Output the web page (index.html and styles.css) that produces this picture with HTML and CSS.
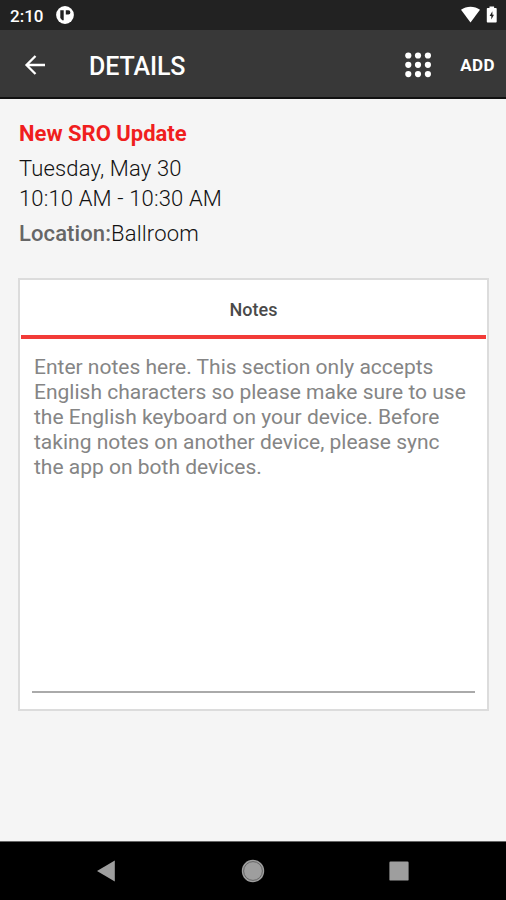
FILE: index.html
```html
<!DOCTYPE html>
<html lang="en">
<head>
<meta charset="utf-8">
<title>Details</title>
<link rel="stylesheet" href="styles.css">
</head>
<body>
<div class="screen">
  <div class="status">
    <span class="clock">2:10</span>
    <svg class="app-badge" width="20" height="20" viewBox="0 0 20 20"><circle cx="10" cy="10" r="8.900" fill="#fff"/><path d="M5.300 5.300h3.400v10H7.200L5.300 13zM10.800 5.300h2.500a2.100 2.100 0 0 1 0 4.200H10.800z" fill="#222"/></svg>
    <svg class="signal" width="48" height="20" viewBox="0 0 48 20"><path d="M4 4.800C9.500.7 17.500.7 23 4.800L13.500 17.500z" fill="#fff"/><path d="M30.800 3h1.700V1.400h4.600V3h1.600c.6 0 1 .4 1 1v12.500c0 .6-.4 1-1 1h-7.900c-.6 0-1-.4-1-1V4c0-.6.400-1 1-1z" fill="#fff"/><path d="M35.400 6.200l-2.800 4.700h1.700v3.500l2.700-4.600h-1.600z" fill="#222"/></svg>
  </div>
  <header class="bar">
    <svg class="back" width="24" height="24" viewBox="0 0 24 24" fill="none" stroke="#fff" stroke-width="2.300"><path d="M22 12H4M12.500 3L3.500 12l9 9"/></svg>
    <h1 class="heading">DETAILS</h1>
    <svg class="grid" width="28" height="28" viewBox="0 0 28 28" fill="#fff"><circle cx="4.300" cy="4.500" r="3.100"/><circle cx="14" cy="4.500" r="3.100"/><circle cx="23.900" cy="4.500" r="3.100"/><circle cx="4.300" cy="13.800" r="3.100"/><circle cx="14" cy="13.800" r="3.100"/><circle cx="23.900" cy="13.800" r="3.100"/><circle cx="4.300" cy="23.100" r="3.100"/><circle cx="14" cy="23.100" r="3.100"/><circle cx="23.900" cy="23.100" r="3.100"/></svg>
    <span class="add">ADD</span>
  </header>
  <main class="content">
    <h2 class="title">New SRO Update</h2>
    <p class="date">Tuesday, May 30</p>
    <p class="time">10:10 AM - 10:30 AM</p>
    <p class="location"><b>Location:</b>Ballroom</p>
    <section class="card">
      <h3 class="tab">Notes</h3>
      <div class="note">Enter notes here. This section only accepts<br>English characters so please make sure to use<br>the English keyboard on your device. Before<br>taking notes on another device, please sync<br>the app on both devices.</div>
    </section>
  </main>
  <nav class="nav">
    <svg width="24" height="24" viewBox="0 0 24 24"><path d="M3 12L20.800 1.500v21z" fill="#9e9e9e"/></svg>
    <svg width="24" height="24" viewBox="0 0 24 24"><circle cx="12" cy="12" r="11.200" fill="#9e9e9e"/><circle cx="12" cy="12" r="9.400" fill="none" stroke="#555" stroke-width=".8"/></svg>
    <svg width="24" height="24" viewBox="0 0 24 24"><rect x="2.400" y="2.600" width="19.200" height="19" rx="1.200" fill="#9e9e9e"/></svg>
  </nav>
</div>
</body>
</html>
```

FILE: styles.css
```css
* { box-sizing: border-box; }
body, h1, h2, h3, p { margin: 0; font-weight: 400; }
body { font-family: Roboto, "Liberation Sans", sans-serif; color: #111; }
svg { display: block; flex: none; }
.screen { width: 506px; height: 900px; display: flex; flex-direction: column; background: #f5f5f5; overflow: hidden; }
.status { height: 30px; flex: none; display: flex; align-items: center; background: #222; padding: 0 0 0 10px; }
.clock { color: #fff; font-size: 17px; font-weight: 500; width: 45px; line-height: 20px; padding-top: 2px; }
.signal { margin-left: auto; margin-right: 1px; }
.bar { height: 69px; flex: none; display: flex; align-items: center; background: #383838; border-bottom: 2px solid #111; padding: 2px 11px 0 23px; }
.heading { margin-left: 42px; color: #fff; font-size: 25px; font-weight: 500; line-height: 30px; padding-top: 4px; letter-spacing: -.1px; }
.grid { margin-left: auto; margin-right: 28px; }
.add { color: #fff; font-size: 17px; font-weight: 700; line-height: 20px; padding-top: 1px; letter-spacing: .4px; }
.content { flex: 1; padding: 21px 17px 0 18px; }
.title, .date, .time, .location { padding-left: 1px; font-size: 22px; line-height: 28px; white-space: nowrap; }
.title { color: #f01e1e; font-weight: 700; }
.date, .time, .location { font-weight: 300; letter-spacing: .15px; }
.date { margin-top: 7px; }
.time { margin-top: 2px; }
.location { margin-top: 7px; }
.location b { color: #666; font-weight: 500; letter-spacing: .1px; }
.card { height: 433px; margin-top: 30px; background: #fff; border: 2px solid #dcdcdc; display: flex; flex-direction: column; }
.tab { height: 59px; flex: none; border-bottom: 4px solid #f23b38; text-align: center; color: #4a4a4a; font-size: 18px; font-weight: 500; line-height: 60px; margin: 0 1px; }
.note { flex: 1; margin: 0 12px 16px; padding: 16px 0 0 2px; border-bottom: 2px solid #aaa; color: #858585; font-size: 21px; line-height: 24.9px; white-space: nowrap; }
.nav { height: 59px; flex: none; background: #000; border-top: 1px solid #666; display: flex; align-items: center; justify-content: space-between; padding: 0 95px 0 94px; }
```
